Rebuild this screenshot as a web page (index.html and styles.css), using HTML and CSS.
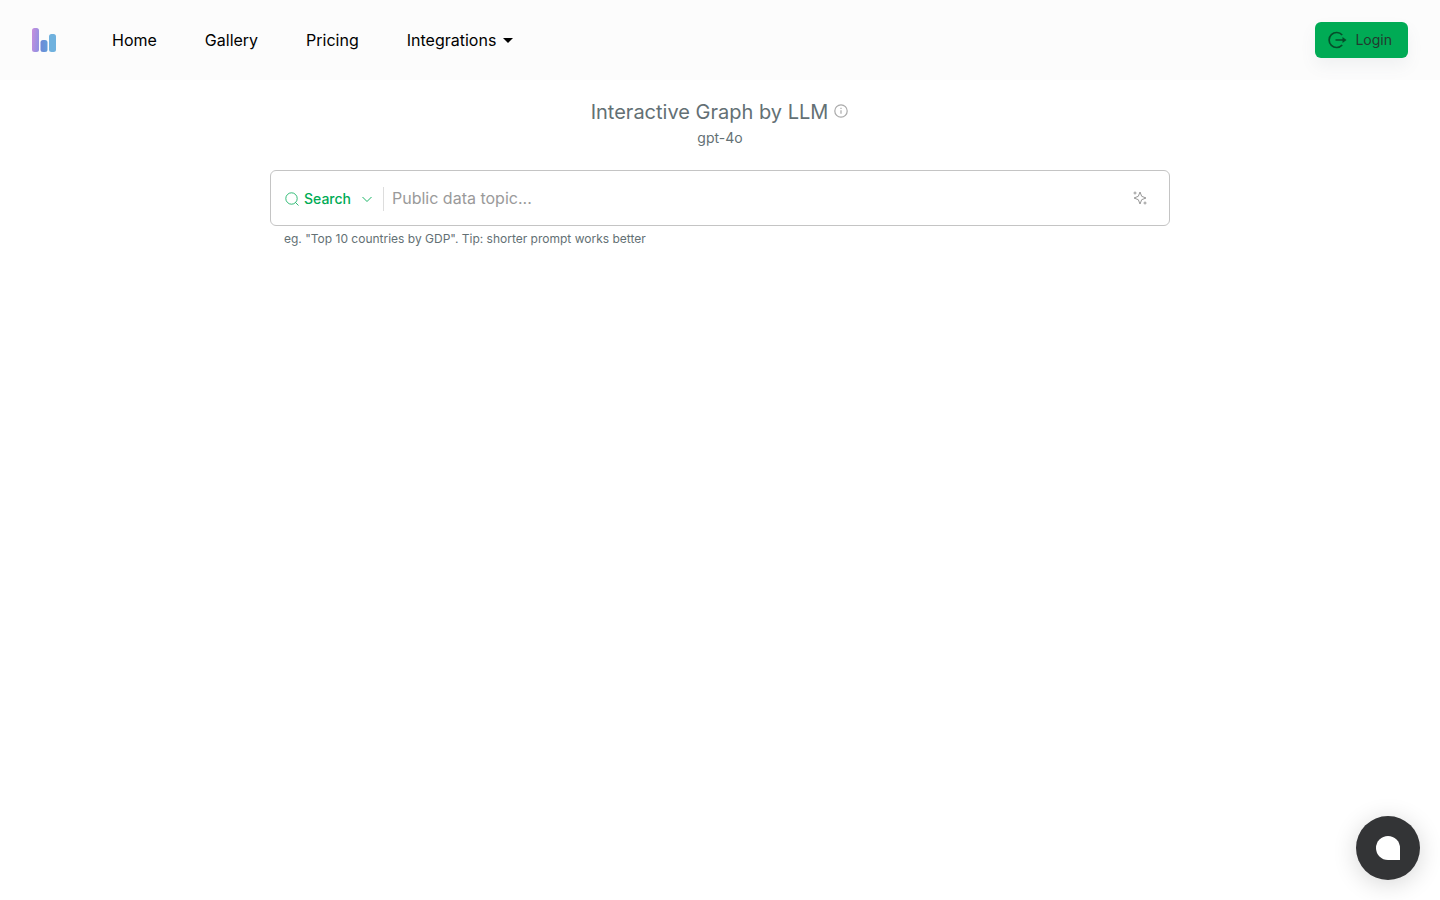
FILE: index.html
```html
<!DOCTYPE html>
<html lang="en">
<head>
<meta charset="utf-8">
<meta name="viewport" content="width=device-width, initial-scale=1">
<title>Interactive Graph by LLM</title>
<link rel="stylesheet" href="styles.css">
</head>
<body>
<header class="header">
  <a class="logo" href="#" aria-label="Home page">
    <svg width="24" height="24" viewBox="0 0 24 24" aria-hidden="true">
      <defs>
        <linearGradient id="bar-a" x1="0" y1="0" x2="1" y2=".4"><stop offset="0" stop-color="#c98edd"/><stop offset="1" stop-color="#9590e2"/></linearGradient>
        <linearGradient id="bar-b" x1="0" y1="0" x2="1" y2="0"><stop offset="0" stop-color="#6f88d6"/><stop offset="1" stop-color="#609ddb"/></linearGradient>
      </defs>
      <rect x="0" y="0" width="7" height="24" rx="2.500" fill="url(#bar-a)"/>
      <rect x="8.500" y="12" width="7" height="12" rx="2.500" fill="url(#bar-b)"/>
      <rect x="17" y="6" width="7" height="18" rx="2.500" fill="#6fb1de"/>
    </svg>
  </a>
  <nav class="nav">
    <a class="nav-link" href="#">Home</a>
    <a class="nav-link" href="#">Gallery</a>
    <a class="nav-link" href="#">Pricing</a>
    <button class="nav-link" type="button" aria-haspopup="true">Integrations
      <svg width="24" height="24" viewBox="0 0 24 24" aria-hidden="true"><path d="M7 10l5 5 5-5z" fill="currentColor"/></svg>
    </button>
  </nav>
  <button class="login" type="button">
    <svg width="20" height="20" viewBox="0 0 20 20" fill="none" stroke="currentColor" stroke-width="1.700" aria-hidden="true">
      <path d="M15.200 5A7.500 7.500 0 1 0 15.200 15M8.500 10H16"/>
      <path d="M15.500 7l4 3-4 3z" fill="currentColor" stroke="none"/>
    </svg>
    Login
  </button>
</header>
<main class="main">
  <h1 class="title">Interactive Graph by LLM
    <svg width="16" height="16" viewBox="0 0 16 16" fill="none" stroke="currentColor" aria-hidden="true"><circle cx="8" cy="8" r="6.200" stroke-width="1.200"/><path d="M8 7.200v3.600M8 4.800v1.300" stroke-width="1.200"/></svg>
  </h1>
  <p class="model">gpt-4o</p>
  <form class="prompt">
    <div class="mode">
      <svg width="16" height="16" viewBox="0 0 16 16" fill="none" stroke="currentColor" stroke-width=".8" aria-hidden="true"><circle cx="7.500" cy="7.500" r="5.700"/><path d="M11.500 11.500l3 3"/></svg>
      <select class="mode-select" aria-label="Mode"><option>Search</option></select>
      <svg width="16" height="16" viewBox="0 0 16 16" fill="none" stroke="currentColor" stroke-width=".9" aria-hidden="true"><path d="M3.500 6L8 10.500 12.500 6"/></svg>
    </div>
    <input class="topic" type="text" placeholder="Public data topic..." aria-label="Public data topic" aria-describedby="hint">
    <button class="generate" type="button" aria-label="Generate">
      <svg width="16" height="16" viewBox="0 0 16 16" fill="none" stroke="currentColor" aria-hidden="true">
        <path d="M8 2L9.700 6.300 14 8 9.700 9.700 8 14 6.300 9.700 2 8 6.300 6.300z" stroke-linejoin="round"/>
        <path d="M3 1.500v3M1.500 3h3M13 11.500v3M11.500 13h3"/>
      </svg>
    </button>
  </form>
  <p class="hint" id="hint">eg. "Top 10 countries by GDP". Tip: shorter prompt works better</p>
</main>
<button class="chat" type="button" aria-label="Open chat">
  <svg width="24" height="24" viewBox="0 0 24 24" aria-hidden="true"><path d="M12 0a12 12 0 0 0 0 24h12V12A12 12 0 0 0 12 0z" fill="#fff"/></svg>
</button>
</body>
</html>
```

FILE: styles.css
```css
* {
  box-sizing: border-box;
}

body {
  margin: 0;
  background: #fff;
  color: #636b74;
  font-family: Inter, "Liberation Sans", sans-serif;
}

button,
input,
select {
  margin: 0;
  padding: 0;
  border: 0;
  background: none;
  font: inherit;
}

svg {
  display: block;
  flex: none;
}

.header {
  display: flex;
  align-items: center;
  min-height: 80px;
  padding: 0 32px;
  background: #fcfcfc;
}

.logo {
  margin-right: 56px;
}

.nav {
  display: flex;
  flex: 1;
  gap: 48px;
}

.nav-link {
  display: flex;
  align-items: center;
  color: #000;
  font-size: 16px;
  line-height: 24px;
  text-decoration: none;
}

.login {
  display: flex;
  align-items: center;
  gap: 8px;
  height: 36px;
  padding: 0 16px 0 12px;
  border-radius: 6px;
  background: #00ab55;
  box-shadow: 0 8px 16px rgba(99, 115, 129, .08);
  color: #23392f;
  font-size: 14px;
  line-height: 20px;
}

.login svg {
  color: #064d2a;
}

.main {
  max-width: 932px;
  margin: 0 auto;
  padding: 16px;
}

.title {
  display: flex;
  justify-content: center;
  gap: 5px;
  margin: 0;
  color: #637074;
  font-size: 20px;
  font-weight: 400;
  line-height: 32px;
}

.title svg {
  margin-top: 7px;
  color: #aaa;
}

.model {
  margin: 0 0 22px;
  color: #637074;
  font-size: 14px;
  line-height: 20px;
  text-align: center;
}

.prompt {
  display: flex;
  align-items: center;
  height: 56px;
  padding: 0 13px;
  border: 1px solid #c4c4c4;
  border-radius: 6px;
}

.mode {
  display: flex;
  align-items: center;
  height: 24px;
  gap: 4px;
  margin: 2px 8px 0 0;
  padding-right: 8px;
  border-right: 1px solid #ddd;
  color: #00ab55;
}

.mode-select {
  width: 51px;
  appearance: none;
  color: inherit;
  font-size: 14px;
  font-weight: 500;
  line-height: 24px;
}

.topic {
  flex: 1;
  min-width: 0;
  color: #222;
  font-size: 16px;
  line-height: 24px;
  outline: 0;
}

.topic::placeholder {
  color: #9a9a9a;
  opacity: 1;
}

.generate {
  padding: 8px;
  color: #999;
}

.hint {
  margin: 4px 14px 0;
  color: #637074;
  font-size: 12px;
  line-height: 18px;
}

.chat {
  position: fixed;
  right: 20px;
  bottom: 20px;
  display: grid;
  place-items: center;
  width: 64px;
  height: 64px;
  border-radius: 50%;
  background: #333436;
  box-shadow: 0 4px 24px rgba(0, 0, 0, .16);
}
```
